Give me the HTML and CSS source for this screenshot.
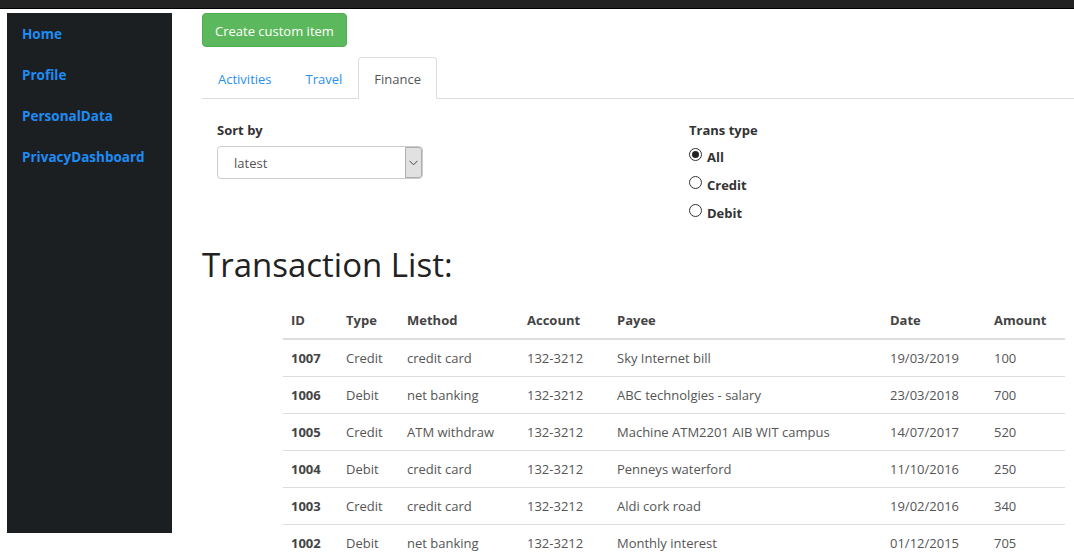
FILE: index.html
```html
<!DOCTYPE html>
<html>
<head>
<meta charset="utf-8">
<link rel="stylesheet" href="styles.css">
</head>
<body>
<div class="topbar"></div>
<div class="page">
  <nav class="sidebar">
    <a href="#">Home</a>
    <a href="#">Profile</a>
    <a href="#">PersonalData</a>
    <a href="#">PrivacyDashboard</a>
  </nav>
  <main class="main">
    <button class="btn-create">Create custom item</button>
    <ul class="tabs">
      <li><a href="#">Activities</a></li>
      <li class="tight"><a href="#">Travel</a></li>
      <li class="active"><a href="#">Finance</a></li>
    </ul>
    <div class="filters">
      <div class="field">
        <label class="lbl">Sort by</label>
        <div class="select">
          <span class="select-value">latest</span>
          <span class="select-arrow"><svg width="9" height="6" viewBox="0 0 9 6"><path d="M0.5 0.8 L4.5 4.8 L8.5 0.8" fill="none" stroke="#444" stroke-width="1"/></svg></span>
        </div>
      </div>
      <div class="field">
        <label class="lbl">Trans type</label>
        <label class="radio"><span class="dot checked"></span>All</label>
        <label class="radio"><span class="dot"></span>Credit</label>
        <label class="radio"><span class="dot"></span>Debit</label>
      </div>
    </div>
    <h1 class="title">Transaction List:</h1>
    <table class="tx">
      <thead>
        <tr><th class="c-id">ID</th><th class="c-type">Type</th><th class="c-method">Method</th><th class="c-acc">Account</th><th class="c-payee">Payee</th><th class="c-date">Date</th><th class="c-amt">Amount</th></tr>
      </thead>
      <tbody>
        <tr><th>1007</th><td>Credit</td><td>credit card</td><td>132-3212</td><td>Sky Internet bill</td><td>19/03/2019</td><td>100</td></tr>
        <tr><th>1006</th><td>Debit</td><td>net banking</td><td>132-3212</td><td>ABC technolgies - salary</td><td>23/03/2018</td><td>700</td></tr>
        <tr><th>1005</th><td>Credit</td><td>ATM withdraw</td><td>132-3212</td><td>Machine ATM2201 AIB WIT campus</td><td>14/07/2017</td><td>520</td></tr>
        <tr><th>1004</th><td>Debit</td><td>credit card</td><td>132-3212</td><td>Penneys waterford</td><td>11/10/2016</td><td>250</td></tr>
        <tr><th>1003</th><td>Credit</td><td>credit card</td><td>132-3212</td><td>Aldi cork road</td><td>19/02/2016</td><td>340</td></tr>
        <tr><th>1002</th><td>Debit</td><td>net banking</td><td>132-3212</td><td>Monthly interest</td><td>01/12/2015</td><td>705</td></tr>
      </tbody>
    </table>
  </main>
</div>
</body>
</html>
```
FILE: styles.css
```css
* { box-sizing: border-box; }
html, body { margin: 0; padding: 0; }
body {
  font-family: "Open Sans", "Noto Sans", sans-serif;
  font-size: 13px;
  line-height: 20px;
  color: #333;
  background: #fff;
  overflow: hidden;
  height: 553px;
}
.topbar {
  height: 9px;
  background: #222;
  border-bottom: 1px solid #000;
}
.page {
  display: flex;
  align-items: flex-start;
  padding-top: 4px;
}
.sidebar {
  margin-left: 7px;
  width: 165px;
  height: 520px;
  flex: none;
  background: #1c1f21;
  display: flex;
  flex-direction: column;
  padding: 11px 0 0 15px;
  gap: 21px;
}
.sidebar a {
  color: #1e8cf5;
  font-weight: 700;
  text-decoration: none;
  font-size: 13.5px;
  line-height: 20px;
}
.main {
  flex: 1;
  margin-left: 30px;
  min-width: 0;
}
.btn-create {
  display: block;
  font-family: inherit;
  font-size: 13px;
  line-height: 20px;
  color: #fff;
  background: #5cb85c;
  border: 1px solid #4cae4c;
  border-radius: 4px;
  height: 34px;
  padding: 7px 12px 6px;
  cursor: pointer;
}
.tabs {
  list-style: none;
  margin: 10px 0 0;
  padding: 0;
  display: flex;
  border-bottom: 1px solid #ddd;
  height: 42px;
}
.tabs li { margin-bottom: -1px; margin-right: 2px; }
.tabs a {
  display: block;
  padding: 11px 15px 9px;
  height: 42px;
  color: #2a8ff0;
  text-decoration: none;
  border: 1px solid transparent;
  border-radius: 4px 4px 0 0;
}
.tabs li.tight a { padding-right: 13px; }
.tabs li.active a {
  color: #555;
  background: #fff;
  border-color: #ddd;
  border-bottom-color: #fff;
}
.filters {
  display: grid;
  grid-template-columns: 472px 1fr;
  padding: 21px 15px 0;
}
.field { display: flex; flex-direction: column; align-items: flex-start; }
.lbl {
  font-weight: 700;
  margin-bottom: 6px;
  color: #333;
}
.select {
  width: 206px;
  height: 33px;
  border: 1px solid #ccc;
  border-radius: 4px;
  display: flex;
  align-items: stretch;
  overflow: hidden;
}
.select-value {
  flex: 1;
  padding: 6px 16px;
  color: #555;
}
.select-arrow {
  width: 17px;
  background: #e1e1e1;
  border: 1px solid #adadad;
  border-radius: 0 3px 3px 0;
  display: flex;
  align-items: center;
  justify-content: center;
}
.radio {
  display: flex;
  align-items: center;
  font-weight: 700;
  height: 20px;
  margin-top: 1px;
  margin-bottom: 7px;
}
.dot {
  width: 13px;
  height: 13px;
  border: 1px solid #333;
  border-radius: 50%;
  margin-right: 5px;
  display: inline-flex;
  align-items: center;
  justify-content: center;
  position: relative;
  top: -3px;
}
.dot.checked::after {
  content: "";
  width: 7px;
  height: 7px;
  border-radius: 50%;
  background: #222;
}
.title {
  font-size: 33px;
  font-weight: 400;
  line-height: 40px;
  margin: 15px 0 17px;
  color: #222;
}
.tx {
  margin-left: 81px;
  width: 782px;
  border-collapse: collapse;
  table-layout: fixed;
}
.tx th, .tx td {
  text-align: left;
  padding: 8px;
  line-height: 20px;
  border-top: 1px solid #ddd;
  white-space: nowrap;
  overflow: hidden;
  vertical-align: top;
}
.tx thead th {
  border-top: 0;
  border-bottom: 2px solid #ddd;
}
.tx tbody tr:first-child th, .tx tbody tr:first-child td { border-top: 0; }
.tx td { color: #555; }
.tx th { font-weight: 700; color: #444; }
.c-id { width: 55px; }
.c-type { width: 61px; }
.c-method { width: 120px; }
.c-acc { width: 90px; }
.c-payee { width: 273px; }
.c-date { width: 104px; }
.c-amt { width: 79px; }
```
